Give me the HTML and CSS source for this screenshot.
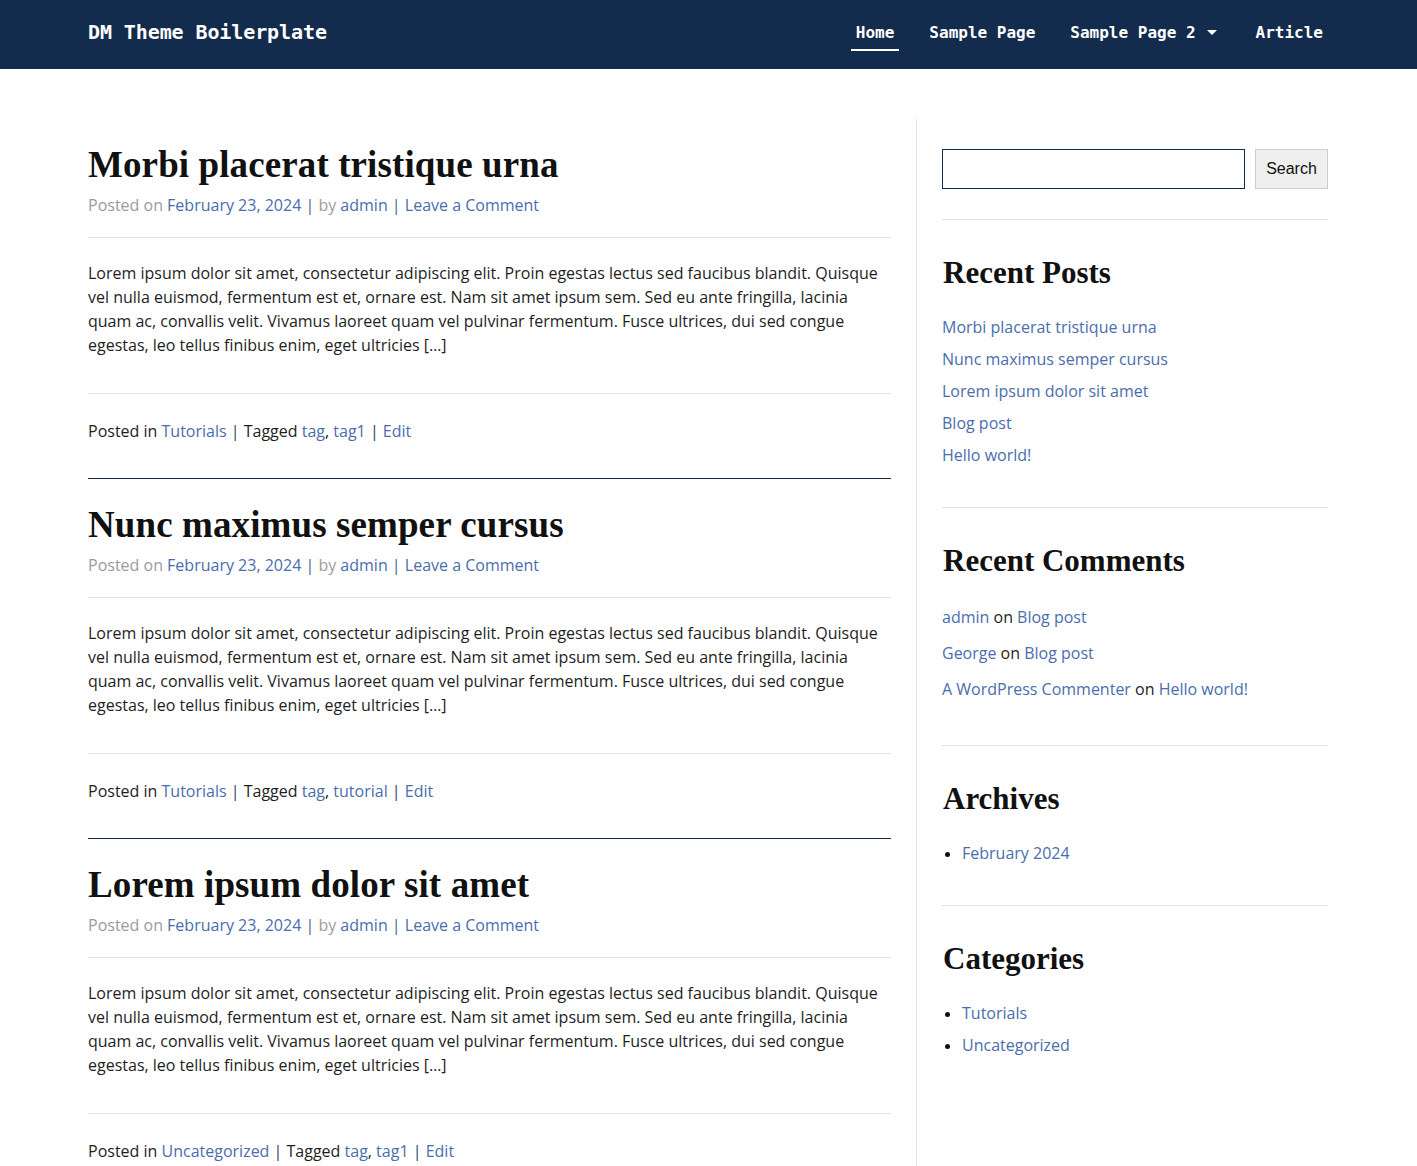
FILE: index.html
```html
<!DOCTYPE html>
<html lang="en">
<head>
<meta charset="utf-8">
<title>DM Theme Boilerplate</title>
<link rel="stylesheet" href="styles.css">
</head>
<body>
<header class="site-header">
  <div class="header-inner">
    <a class="brand" href="#">DM Theme Boilerplate</a>
    <nav class="main-nav">
      <a class="nav-link active" href="#">Home</a>
      <a class="nav-link" href="#">Sample Page</a>
      <a class="nav-link has-sub" href="#">Sample Page 2<span class="caret"></span></a>
      <a class="nav-link" href="#">Article</a>
    </nav>
  </div>
</header>

<div class="container">
  <main class="main-col">
    <article class="post">
      <div class="post-header">
        <h2 class="post-title">Morbi placerat tristique urna</h2>
        <div class="post-meta"><span class="muted">Posted on</span> <a href="#">February 23, 2024</a> <span class="sep">|</span> <span class="muted">by</span> <a href="#">admin</a> <span class="sep">|</span> <a href="#">Leave a Comment</a></div>
      </div>
      <p class="excerpt">Lorem ipsum dolor sit amet, consectetur adipiscing elit. Proin egestas lectus sed faucibus blandit. Quisque vel nulla euismod, fermentum est et, ornare est. Nam sit amet ipsum sem. Sed eu ante fringilla, lacinia quam ac, convallis velit. Vivamus laoreet quam vel pulvinar fermentum. Fusce ultrices, dui sed congue egestas, leo tellus finibus enim, eget ultricies […]</p>
      <div class="post-footer">Posted in <a href="#">Tutorials</a> <span class="sep2">|</span> Tagged <a href="#">tag</a>, <a href="#">tag1</a> <span class="sep2">|</span> <a href="#">Edit</a></div>
    </article>

    <article class="post">
      <div class="post-header">
        <h2 class="post-title">Nunc maximus semper cursus</h2>
        <div class="post-meta"><span class="muted">Posted on</span> <a href="#">February 23, 2024</a> <span class="sep">|</span> <span class="muted">by</span> <a href="#">admin</a> <span class="sep">|</span> <a href="#">Leave a Comment</a></div>
      </div>
      <p class="excerpt">Lorem ipsum dolor sit amet, consectetur adipiscing elit. Proin egestas lectus sed faucibus blandit. Quisque vel nulla euismod, fermentum est et, ornare est. Nam sit amet ipsum sem. Sed eu ante fringilla, lacinia quam ac, convallis velit. Vivamus laoreet quam vel pulvinar fermentum. Fusce ultrices, dui sed congue egestas, leo tellus finibus enim, eget ultricies […]</p>
      <div class="post-footer">Posted in <a href="#">Tutorials</a> <span class="sep2">|</span> Tagged <a href="#">tag</a>, <a href="#">tutorial</a> <span class="sep2">|</span> <a href="#">Edit</a></div>
    </article>

    <article class="post">
      <div class="post-header">
        <h2 class="post-title">Lorem ipsum dolor sit amet</h2>
        <div class="post-meta"><span class="muted">Posted on</span> <a href="#">February 23, 2024</a> <span class="sep">|</span> <span class="muted">by</span> <a href="#">admin</a> <span class="sep">|</span> <a href="#">Leave a Comment</a></div>
      </div>
      <p class="excerpt">Lorem ipsum dolor sit amet, consectetur adipiscing elit. Proin egestas lectus sed faucibus blandit. Quisque vel nulla euismod, fermentum est et, ornare est. Nam sit amet ipsum sem. Sed eu ante fringilla, lacinia quam ac, convallis velit. Vivamus laoreet quam vel pulvinar fermentum. Fusce ultrices, dui sed congue egestas, leo tellus finibus enim, eget ultricies […]</p>
      <div class="post-footer">Posted in <a href="#">Uncategorized</a> <span class="sep2">|</span> Tagged <a href="#">tag</a>, <a href="#">tag1</a> <span class="sep2">|</span> <a href="#">Edit</a></div>
    </article>
  </main>

  <aside class="sidebar">
    <form class="search-form">
      <input class="search-input" type="text" aria-label="Search">
      <button class="search-btn" type="button">Search</button>
    </form>

    <section class="widget">
      <h3 class="widget-title">Recent Posts</h3>
      <ul class="plain-list">
        <li><a href="#">Morbi placerat tristique urna</a></li>
        <li><a href="#">Nunc maximus semper cursus</a></li>
        <li><a href="#">Lorem ipsum dolor sit amet</a></li>
        <li><a href="#">Blog post</a></li>
        <li><a href="#">Hello world!</a></li>
      </ul>
    </section>

    <section class="widget widget-comments">
      <h3 class="widget-title">Recent Comments</h3>
      <ul class="plain-list">
        <li><a href="#">admin</a> on <a href="#">Blog post</a></li>
        <li><a href="#">George</a> on <a href="#">Blog post</a></li>
        <li><a href="#">A WordPress Commenter</a> on <a href="#">Hello world!</a></li>
      </ul>
    </section>

    <section class="widget">
      <h3 class="widget-title">Archives</h3>
      <ul class="bullet-list">
        <li><a href="#">February 2024</a></li>
      </ul>
    </section>

    <section class="widget">
      <h3 class="widget-title">Categories</h3>
      <ul class="bullet-list">
        <li><a href="#">Tutorials</a></li>
        <li><a href="#">Uncategorized</a></li>
      </ul>
    </section>
  </aside>
</div>
</body>
</html>
```

FILE: styles.css
```css
* { box-sizing: border-box; }

html, body {
  margin: 0;
  padding: 0;
  background: #ffffff;
}

body {
  font-family: "Open Sans", "Liberation Sans", sans-serif;
  font-size: 16px;
  line-height: 24px;
  color: #1e1e1e;
}

a {
  color: #4b6dae;
  text-decoration: none;
}

/* Header */
.site-header {
  background: #132c4d;
  height: 69px;
}

.header-inner {
  width: 1240px;
  margin-left: calc(50% - 620.5px);
  height: 69px;
  padding-top: 20px;
  display: flex;
  justify-content: space-between;
  align-items: flex-start;
}

.brand {
  font-family: "DejaVu Sans Mono", "Liberation Mono", monospace;
  font-weight: bold;
  font-size: 20px;
  line-height: 25px;
  color: #ffffff;
  letter-spacing: -0.1px;
}

.main-nav {
  display: flex;
  gap: 25px;
}

.nav-link {
  font-family: "DejaVu Sans Mono", "Liberation Mono", monospace;
  font-weight: bold;
  font-size: 16px;
  line-height: 25px;
  color: #ffffff;
  padding: 0 5px 4px;
  border-bottom: 2px solid transparent;
  display: flex;
  align-items: center;
}

.nav-link.active {
  border-bottom-color: #ffffff;
}

.nav-link.has-sub {
  margin-right: 4px;
}

.caret {
  display: inline-block;
  width: 0;
  height: 0;
  margin-left: 11px;
  border-left: 5px solid transparent;
  border-right: 5px solid transparent;
  border-top: 5px solid #ffffff;
}

/* Layout */
.container {
  width: 1240px;
  margin: 50px 0 0 calc(50% - 620.5px);
  display: flex;
  gap: 25px;
  align-items: stretch;
}

.main-col {
  width: 803px;
  flex: none;
}

/* Posts */
.post {
  padding: 24px 0 35px;
  border-top: 1px solid #132c4d;
}

.post:first-child {
  border-top: none;
}

.post-header {
  padding-bottom: 20px;
  border-bottom: 1px solid #dfe4eb;
}

.post-title {
  font-family: "Liberation Serif", "Times New Roman", serif;
  font-weight: bold;
  font-size: 37px;
  line-height: 44px;
  margin: 0;
  color: #111111;
  letter-spacing: 0.1px;
}

.post-meta {
  margin-top: 6px;
}

.muted {
  color: #9b9b9b;
}

.sep {
  color: #3f5f92;
}

.sep2 {
  color: #2a3f5e;
}

.excerpt {
  margin: 0;
  padding: 23px 0 36px;
  border-bottom: 1px solid #dfe4eb;
}

.post-footer {
  padding-top: 25px;
}

/* Sidebar */
.sidebar {
  flex: 1;
  border-left: 1px solid #dfe4eb;
  padding: 30px 0 0 25px;
  min-height: 1100px;
}

.search-form {
  display: flex;
  gap: 10px;
  padding-bottom: 30px;
}

.search-input {
  flex: 1;
  height: 40px;
  border: 1px solid #132c4d;
  border-radius: 0;
  background: #ffffff;
  margin: 0;
}

.search-btn {
  width: 73px;
  height: 40px;
  margin: 0;
  font-family: "Liberation Sans", Arial, sans-serif;
  font-size: 16px;
  color: #111111;
  background: #efefef;
  border: 1px solid #cccccc;
  border-radius: 0;
  padding: 0;
}

.widget {
  border-top: 1px solid #dfe4eb;
  padding: 35px 0 40px;
}

.widget-title {
  font-family: "Liberation Serif", "Times New Roman", serif;
  font-weight: bold;
  font-size: 31px;
  line-height: 36px;
  margin: 0 0 24px;
  color: #111111;
  padding-left: 1px;
}

.plain-list,
.bullet-list {
  margin: 0;
  padding: 0;
  display: flex;
  flex-direction: column;
  gap: 8px;
}

.plain-list {
  list-style: none;
}

.bullet-list {
  list-style: disc;
  padding-left: 20px;
}

.bullet-list li::marker {
  color: #111111;
  font-size: 15px;
}

.widget-comments {
  padding-bottom: 44px;
}

.widget-comments .widget-title {
  margin-bottom: 26px;
}

.widget-comments .plain-list {
  gap: 12px;
}
```
